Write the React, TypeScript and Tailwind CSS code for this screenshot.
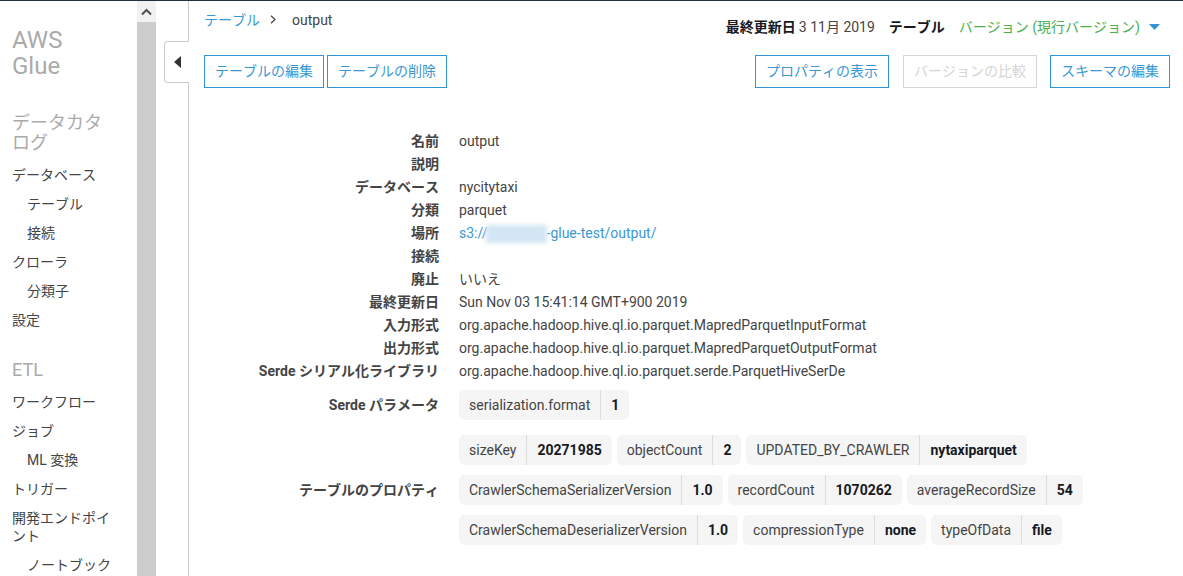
import React from "react";

function NavItem({ children, sub }: { children: React.ReactNode; sub?: boolean }) {
  return (
    <div className={`text-[14px] leading-[18px] text-[#444] pb-[11px] [font-kerning:none] ${sub ? "pl-[15px]" : ""}`}>
      {children}
    </div>
  );
}

function Btn({ children, w, disabled }: { children: React.ReactNode; w: string; disabled?: boolean }) {
  return (
    <div
      className={`h-[33px] border flex items-center justify-center text-[14px] [font-kerning:none] ${w} ${
        disabled ? "border-[#d5d5d5] text-[#d5d5d5]" : "border-[#2f96d3] text-[#3b97d3]"
      }`}
    >
      {children}
    </div>
  );
}

function Row({ label, children }: { label: string; children?: React.ReactNode }) {
  return (
    <div className="flex h-[23px] items-center text-[14px]">
      <div className="w-[235px] text-right font-bold text-[#444] whitespace-nowrap [font-kerning:none]">{label}</div>
      <div className="ml-[20px] text-[#444] whitespace-nowrap">{children}</div>
    </div>
  );
}

function Chip({ k, v }: { k: string; v: string }) {
  return (
    <div className="h-[30px] flex items-center bg-[#f5f5f5] rounded-[5px] text-[14px] text-[#444] whitespace-nowrap">
      <div className="px-[10px] h-full flex items-center border-r border-[#dcdcdc]">{k}</div>
      <div className="px-[10px] h-full flex items-center font-bold text-[#16191f]">{v}</div>
    </div>
  );
}

export default function App() {
  return (
    <div
      className="w-[1183px] h-[576px] overflow-hidden bg-white border-t border-[#232f3e] flex relative"
      style={{ fontFamily: 'Roboto, "Noto Sans CJK JP", sans-serif' }}
    >
      <aside className="w-[137px] shrink-0 pl-[12px] pr-[25px] pt-[26px]">
        <div className="text-[24px] leading-[26px] text-[#aaa]">AWS Glue</div>
        <div className="text-[18px] leading-[20px] text-[#aaa] mt-[34px] mb-[13px] [font-kerning:none]">データカタログ</div>
        <NavItem>データベース</NavItem>
        <NavItem sub>テーブル</NavItem>
        <NavItem sub>接続</NavItem>
        <NavItem>クローラ</NavItem>
        <NavItem sub>分類子</NavItem>
        <NavItem>設定</NavItem>
        <div className="text-[18px] leading-[20px] text-[#aaa] mt-[20px] mb-[13px]">ETL</div>
        <NavItem>ワークフロー</NavItem>
        <NavItem>ジョブ</NavItem>
        <NavItem sub>ML 変換</NavItem>
        <NavItem>トリガー</NavItem>
        <NavItem>開発エンドポイント</NavItem>
        <NavItem sub>ノートブック</NavItem>
      </aside>

      <div className="w-[19px] shrink-0 bg-[#cdcdcd] flex flex-col">
        <div className="h-[21px] bg-[#f1f1f1] flex items-center justify-center">
          <svg width="11" height="8" viewBox="0 0 11 8" fill="none">
            <path d="M1 6.5L5.5 2L10 6.5" stroke="#505050" strokeWidth="2" />
          </svg>
        </div>
      </div>

      <div className="w-[33px] shrink-0 border-r border-[#cccccc] h-full" />

      <div className="absolute left-[164px] top-[40px] w-[25px] h-[42px] bg-white border border-r-0 border-[#cccccc] rounded-l-[4px] flex items-center pl-[9px]">
        <svg width="7" height="12" viewBox="0 0 7 12">
          <path d="M7 0V12L0 6Z" fill="#333" />
        </svg>
      </div>

      <main className="flex-1 min-w-0 pl-[15px] pr-[13px]">
        <div className="flex justify-between items-start h-[54px]">
          <div className="flex items-center text-[14px] h-[38px] [font-kerning:none]">
            <span className="text-[#3b97d3]">テーブル</span>
            <svg className="ml-[10px] mr-[15px] -mt-[2px]" width="7" height="9" viewBox="0 0 7 9" fill="none">
              <path d="M1 0.7L5 4.5L1 8.3" stroke="#444" strokeWidth="1.2" />
            </svg>
            <span className="text-[#444]">output</span>
          </div>
          <div className="flex items-center text-[14px] h-[52px] pr-[10px] text-[#444] whitespace-nowrap">
            <span className="font-bold text-[#16191f] [font-kerning:none]">最終更新日</span>
            <span className="ml-[3px]">3 11月 2019</span>
            <span className="font-bold text-[#16191f] ml-[14px] [font-kerning:none]">テーブル</span>
            <span className="text-[#4caf50] ml-[14px] [font-kerning:none]">バージョン (現行バージョン)</span>
            <svg className="ml-[9px]" width="11" height="6" viewBox="0 0 11 6">
              <path d="M0 0H11L5.5 6Z" fill="#2f96d3" />
            </svg>
          </div>
        </div>

        <div className="flex justify-between">
          <div className="flex gap-[3px]">
            <Btn w="w-[120px]">テーブルの編集</Btn>
            <Btn w="w-[120px]">テーブルの削除</Btn>
          </div>
          <div className="flex">
            <Btn w="w-[134px]">プロパティの表示</Btn>
            <div className="w-[14px]" />
            <Btn w="w-[134px]" disabled>バージョンの比較</Btn>
            <div className="w-[13px]" />
            <Btn w="w-[120px]">スキーマの編集</Btn>
          </div>
        </div>

        <div className="mt-[42px]">
          <Row label="名前">output</Row>
          <Row label="説明" />
          <Row label="データベース">nycitytaxi</Row>
          <Row label="分類">parquet</Row>
          <Row label="場所">
            <span className="text-[#3b97d3] flex items-center">
              s3://
              <span className="inline-block w-[61px] h-[18px] -ml-[2px] bg-[#d3e6f3] blur-[2px]" />
              -glue-test/output/
            </span>
          </Row>
          <Row label="接続" />
          <Row label="廃止"><span className="[font-kerning:none]">いいえ</span></Row>
          <Row label="最終更新日">Sun Nov 03 15:41:14 GMT+900 2019</Row>
          <Row label="入力形式">org.apache.hadoop.hive.ql.io.parquet.MapredParquetInputFormat</Row>
          <Row label="出力形式">org.apache.hadoop.hive.ql.io.parquet.MapredParquetOutputFormat</Row>
          <Row label="Serde シリアル化ライブラリ">org.apache.hadoop.hive.ql.io.parquet.serde.ParquetHiveSerDe</Row>
        </div>

        <div className="flex items-center text-[14px] mt-[7px]">
          <div className="w-[235px] text-right font-bold text-[#444] [font-kerning:none]">Serde パラメータ</div>
          <div className="ml-[20px] flex">
            <Chip k="serialization.format" v="1" />
          </div>
        </div>

        <div className="flex items-center text-[14px] mt-[15px]">
          <div className="w-[235px] text-right font-bold text-[#444] [font-kerning:none]">テーブルのプロパティ</div>
          <div className="ml-[20px] flex flex-col gap-[10px]">
            <div className="flex gap-[5px]">
              <Chip k="sizeKey" v="20271985" />
              <Chip k="objectCount" v="2" />
              <Chip k="UPDATED_BY_CRAWLER" v="nytaxiparquet" />
            </div>
            <div className="flex gap-[5px]">
              <Chip k="CrawlerSchemaSerializerVersion" v="1.0" />
              <Chip k="recordCount" v="1070262" />
              <Chip k="averageRecordSize" v="54" />
            </div>
            <div className="flex gap-[5px]">
              <Chip k="CrawlerSchemaDeserializerVersion" v="1.0" />
              <Chip k="compressionType" v="none" />
              <Chip k="typeOfData" v="file" />
            </div>
          </div>
        </div>
      </main>
    </div>
  );
}
